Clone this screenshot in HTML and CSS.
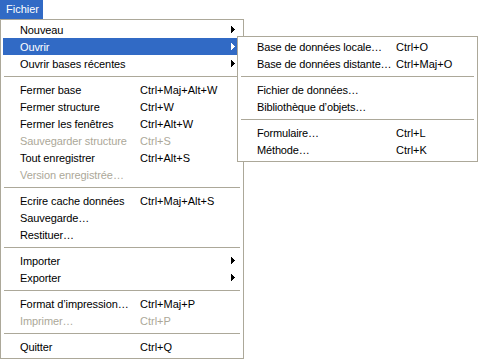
FILE: index.html
```html
<!DOCTYPE html>
<html>
<head>
  <title>Fichier</title>
  <meta charset="UTF-8" />
  <link rel="stylesheet" href="styles.css">
</head>
<body>
  <div class="menubar">
    <span class="menu-title">Fichier</span>
  </div>

  <!-- Main menu -->
  <div class="menu main">
    <div class="item"><span class="label">Nouveau</span><svg class="arrow" viewBox="0 0 4 7"><path d="M0 0h1v7H0zM1 1h1v5H1zM2 2h1v3H2zM3 3h1v1H3z"/></svg></div>
    <div class="item active"><span class="label">Ouvrir</span><svg class="arrow" viewBox="0 0 4 7"><path d="M0 0h1v7H0zM1 1h1v5H1zM2 2h1v3H2zM3 3h1v1H3z"/></svg></div>
    <div class="item"><span class="label">Ouvrir bases récentes</span><svg class="arrow" viewBox="0 0 4 7"><path d="M0 0h1v7H0zM1 1h1v5H1zM2 2h1v3H2zM3 3h1v1H3z"/></svg></div>
    <div class="sep"></div>
    <div class="item"><span class="label">Fermer base</span><span class="key">Ctrl+Maj+Alt+W</span></div>
    <div class="item"><span class="label">Fermer structure</span><span class="key">Ctrl+W</span></div>
    <div class="item"><span class="label">Fermer les fenêtres</span><span class="key">Ctrl+Alt+W</span></div>
    <div class="item disabled"><span class="label">Sauvegarder structure</span><span class="key">Ctrl+S</span></div>
    <div class="item"><span class="label">Tout enregistrer</span><span class="key">Ctrl+Alt+S</span></div>
    <div class="item disabled"><span class="label">Version enregistrée…</span></div>
    <div class="sep"></div>
    <div class="item"><span class="label">Ecrire cache données</span><span class="key">Ctrl+Maj+Alt+S</span></div>
    <div class="item"><span class="label">Sauvegarde…</span></div>
    <div class="item"><span class="label">Restituer…</span></div>
    <div class="sep"></div>
    <div class="item"><span class="label">Importer</span><svg class="arrow" viewBox="0 0 4 7"><path d="M0 0h1v7H0zM1 1h1v5H1zM2 2h1v3H2zM3 3h1v1H3z"/></svg></div>
    <div class="item"><span class="label">Exporter</span><svg class="arrow" viewBox="0 0 4 7"><path d="M0 0h1v7H0zM1 1h1v5H1zM2 2h1v3H2zM3 3h1v1H3z"/></svg></div>
    <div class="sep"></div>
    <div class="item"><span class="label">Format d’impression…</span><span class="key">Ctrl+Maj+P</span></div>
    <div class="item disabled"><span class="label">Imprimer…</span><span class="key">Ctrl+P</span></div>
    <div class="sep"></div>
    <div class="item"><span class="label">Quitter</span><span class="key">Ctrl+Q</span></div>
  </div>

  <!-- Ouvrir submenu -->
  <div class="menu submenu">
    <div class="item"><span class="label">Base de données locale…</span><span class="key">Ctrl+O</span></div>
    <div class="item"><span class="label">Base de données distante…</span><span class="key">Ctrl+Maj+O</span></div>
    <div class="sep"></div>
    <div class="item"><span class="label">Fichier de données…</span></div>
    <div class="item"><span class="label">Bibliothèque d’objets…</span></div>
    <div class="sep"></div>
    <div class="item"><span class="label">Formulaire…</span><span class="key">Ctrl+L</span></div>
    <div class="item"><span class="label">Méthode…</span><span class="key">Ctrl+K</span></div>
  </div>
</body>
</html>
```

FILE: styles.css
```css
body {
  margin: 0;
  width: 481px;
  height: 360px;
  overflow: hidden;
  position: relative;
  background: #fff;
  color: #000;
  font-family: "Liberation Sans", Arial, sans-serif;
  font-size: 11px;
}

.menubar {
  display: flex;
  height: 19px;
}

.menu-title {
  box-sizing: border-box;
  width: 43px;
  padding-left: 6px;
  line-height: 19px;
  background: #316ac5;
  color: #fff;
}

.menu {
  box-sizing: border-box;
  background: #fff;
  border: 1px solid #aca899;
}

.main {
  width: 244px;
  padding: 1px 2px 3px;
}

/* sits over the main menu, next to "Ouvrir" */
.submenu {
  position: absolute;
  left: 237px;
  top: 36px;
  width: 241px;
  padding: 1px 2px 3px;
}

.item {
  display: flex;
  align-items: center;
  height: 17px;
  padding-left: 17px;
  white-space: nowrap;
}

.label {
  width: 120px;
  letter-spacing: -0.1px;
}

.submenu .label {
  width: 139px;
  letter-spacing: -0.15px;
}

.item.active {
  background: #316ac5;
  color: #fff;
}

.item.disabled {
  color: #aca899;
}

.arrow {
  width: 4px;
  height: 7px;
  margin-left: auto;
  margin-right: 6px;
  fill: currentColor;
  shape-rendering: crispEdges;
}

.sep {
  height: 1px;
  margin: 4px 1px;
  background: #aca899;
}
```
